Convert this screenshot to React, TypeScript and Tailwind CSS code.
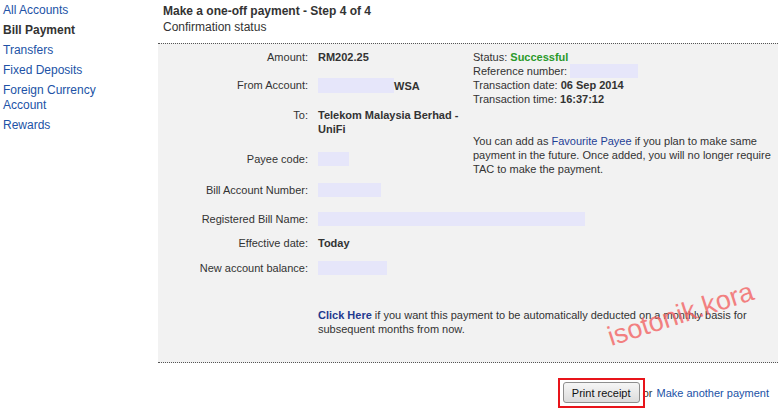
import React from "react";

const Blank = ({ w, h = 14 }: { w: number; h?: number }) => (
  <span className="inline-block bg-[#e6e6fa] align-middle" style={{ width: w, height: h }} />
);

export default function App() {
  const rows: { label: string; value: React.ReactNode; mt: number }[] = [
    { label: "Amount:", value: <b>RM202.25</b>, mt: 0 },
    {
      label: "From Account:",
      value: (
        <span className="flex items-center">
          <Blank w={76} h={15} />
          <b>WSA</b>
        </span>
      ),
      mt: 14,
    },
    {
      label: "To:",
      value: (
        <b>
          Telekom Malaysia Berhad -<br />
          UniFi
        </b>
      ),
      mt: 15,
    },
    { label: "Payee code:", value: <Blank w={31} />, mt: 16 },
    { label: "Bill Account Number:", value: <Blank w={63} />, mt: 17 },
    { label: "Registered Bill Name:", value: <Blank w={267} />, mt: 15 },
    { label: "Effective date:", value: <b>Today</b>, mt: 10 },
    { label: "New account balance:", value: <Blank w={69} />, mt: 11 },
  ];

  return (
    <div
      className="relative w-[779px] h-[412px] overflow-hidden bg-white text-[12px] leading-[14px] text-[#333]"
      style={{ fontFamily: '"Liberation Sans", Arial, sans-serif' }}
    >
      <div className="flex">
        {/* Sidebar */}
        <div className="w-[158px] shrink-0 pl-[3px] pt-[3px]">
          <div className="flex flex-col gap-[5px] leading-[15px] text-[#2152a6]">
            <div>All Accounts</div>
            <div className="font-bold text-[#333]">Bill Payment</div>
            <div>Transfers</div>
            <div>Fixed Deposits</div>
            <div className="w-[110px]">Foreign Currency Account</div>
            <div>Rewards</div>
          </div>
        </div>

        {/* Main */}
        <div className="w-[620px] shrink-0">
          <div className="pl-[5px] pt-[4px] h-[43px]">
            <div className="font-bold">Make a one-off payment - Step 4 of 4</div>
            <div className="mt-[2px]">Confirmation status</div>
          </div>
          <div className="h-[320px] bg-[#f2f2f2] border-y border-dotted border-[#555] pt-[6px] text-[11px]">
            <div className="flex">
              <div className="w-[315px] shrink-0">
                {rows.map((r) => (
                  <div key={r.label} className="flex" style={{ marginTop: r.mt }}>
                    <div className="w-[150px] shrink-0 text-right">{r.label}</div>
                    <div className="pl-[10px] flex items-center min-h-[14px]">{r.value}</div>
                  </div>
                ))}
              </div>
              <div className="w-[305px]">
                <div>
                  Status: <b className="text-[#2a9a2a]">Successful</b>
                </div>
                <div className="flex items-center">
                  Reference number:&nbsp;
                  <Blank w={68} />
                </div>
                <div>
                  Transaction date: <b>06 Sep 2014</b>
                </div>
                <div>
                  Transaction time: <b>16:37:12</b>
                </div>
                <div className="mt-[28px] w-[300px]">
                  You can add as <span className="text-[#1f3f96]">Favourite Payee</span> if you plan to make same
                  payment in the future. Once added, you will no longer require TAC to make the payment.
                </div>
              </div>
            </div>
            <div className="ml-[160px] mt-[33px] w-[450px]">
              <b className="text-[#1f3a8f]">Click Here</b> if you want this payment to be automatically deducted on
              a monthly basis for subsequent months from now.
            </div>
          </div>
          <div className="flex items-center justify-end pr-[9px] mt-[19px] text-[11px]">
            <div className="relative">
              <button
                className="block h-[21px] w-[77px] border border-[#8e8e8e] rounded-[3px] text-[#111] text-[11px] bg-gradient-to-b from-[#f6f6f6] to-[#dcdcdc]"
                style={{ fontFamily: '"Liberation Sans", Arial, sans-serif' }}
              >
                Print receipt
              </button>
              <div className="absolute -left-[5px] -right-[5px] -top-[4px] -bottom-[5px] border-2 border-[#e8141a]" />
            </div>
            <span className="ml-[3px]">or</span>
            <span className="ml-[4px] text-[#2152a6]">Make another payment</span>
          </div>
        </div>
      </div>

      <div
        className="absolute left-[605px] top-[301px] text-[27px] leading-none text-[#f26464] opacity-80 whitespace-nowrap origin-center"
        style={{ transform: "rotate(-18deg)", fontFamily: '"Liberation Sans", Arial, sans-serif' }}
      >
        isotonik.kora
      </div>
    </div>
  );
}
